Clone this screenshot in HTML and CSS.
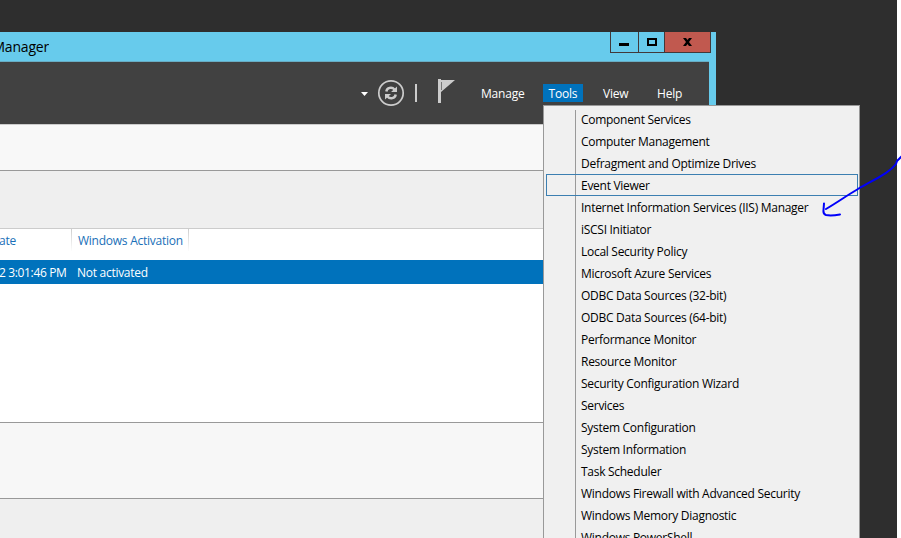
FILE: index.html
```html
<!DOCTYPE html>
<html lang="en">
<head>
<meta charset="utf-8">
<title>Server Manager</title>
<link rel="stylesheet" href="styles.css">
</head>
<body>
<div class="desktop">
  <div class="window">
    <header class="titlebar">
      <h1 class="title"><span>Manager</span></h1>
      <div class="controls">
        <button class="ctl" aria-label="Minimize"><svg width="27" height="20" viewBox="0 0 27 20"><path d="M8 11h10v3H8z"/></svg></button>
        <button class="ctl max" aria-label="Maximize"><svg width="25" height="20" viewBox="0 0 25 20"><path fill-rule="evenodd" d="M8 6h10v8H8zM10 8v4h6V8z"/></svg></button>
        <button class="ctl close" aria-label="Close"><svg width="45" height="20" viewBox="0 0 45 20"><path d="M18 6h3l1.500 2L24 6h3l-3 4 3 4h-3l-1.500-2-1.500 2h-3l3-4z"/></svg></button>
      </div>
    </header>
    <div class="toolbar">
      <svg class="caret" width="7" height="4" viewBox="0 0 7 4"><path d="M0 0h7L3.500 4z" fill="#fff"/></svg>
      <svg class="refresh" width="28" height="28" viewBox="0 0 28 28" fill="none" stroke="#ccc"><circle cx="14" cy="14" r="12.200" stroke-width="1.700"/><path d="M9.300 12.500c.5-4 5.700-5 8.200-2M18.700 15.500c-.5 4-5.700 5-8.200 2" stroke-width="2.400"/><path d="M20 7.500v5.500h-6zM8 20.500V15h6z" fill="#ccc" stroke="none"/></svg>
      <i class="bar"></i>
      <svg class="flag" width="18" height="25" viewBox="0 0 18 25" fill="#ccc"><path d="M0 0h3v24H0zM3 1h14L3 13z"/><path d="M3.500 3v8" stroke="#777"/></svg>
      <nav class="nav"><a class="manage">Manage</a><a class="tools">Tools</a><a class="view">View</a><a class="help">Help</a></nav>
    </div>
    <main class="content">
      <section class="band top"></section>
      <section class="band filter"></section>
      <section class="grid">
        <div class="head"><span class="c1">ate</span><span class="c2">Windows Activation</span></div>
        <div class="row"><span class="c1">2 3:01:46 PM</span><span class="c2">Not activated</span></div>
      </section>
      <section class="band events"></section>
      <section class="band last"></section>
    </main>
  </div>
  <ul class="menu">
    <li>Component Services</li><li>Computer Management</li><li>Defragment and Optimize Drives</li><li class="focus">Event Viewer</li><li>Internet Information Services (IIS) Manager</li><li>iSCSI Initiator</li><li>Local Security Policy</li><li>Microsoft Azure Services</li><li>ODBC Data Sources (32-bit)</li><li>ODBC Data Sources (64-bit)</li><li>Performance Monitor</li><li>Resource Monitor</li><li>Security Configuration Wizard</li><li>Services</li><li>System Configuration</li><li>System Information</li><li>Task Scheduler</li><li>Windows Firewall with Advanced Security</li><li>Windows Memory Diagnostic</li><li>Windows PowerShell</li>
  </ul>
</div>
<svg class="arrow" width="85" height="70" viewBox="816 150 85 70" fill="none" stroke="#0000fa" stroke-width="2" stroke-linecap="round" stroke-linejoin="round"><path d="M902 156L897 161L896 164C889 173 877 178 858 189C846 196 838 202 826 209M824 203.500L823.500 210Q823 214 826 215Q831 216 840 214.500"/></svg>
</body>
</html>
```
FILE: styles.css
```css
* { box-sizing: border-box; }
body {
  margin: 0;
  width: 901px;
  height: 538px;
  overflow: hidden;
  background: #fff;
  font: 12px/22px "Open Sans", "Noto Sans", sans-serif;
  letter-spacing: -0.28px;
  color: #000;
}
.desktop { position: relative; width: 897px; height: 538px; padding-top: 32px; background: #2e2e2e; overflow: hidden; }
.window { width: 716px; height: 506px; padding-right: 7px; background: #67cbec; }
.titlebar { display: flex; justify-content: space-between; height: 30px; margin-right: -7px; padding-right: 5px; }
.title { margin: 0; width: 49px; height: 30px; display: flex; justify-content: flex-end; overflow: hidden; font-size: 14px; line-height: 29px; font-weight: 400; letter-spacing: -0.2px; }
.controls { display: flex; height: 21px; border: 1px solid #42393a; border-top: 0; }
.ctl { display: block; padding: 0; border: 0; background: none; height: 20px; }
.ctl svg { display: block; }
.max { border-left: 1px solid #42393a; }
.close { border-left: 1px solid #42393a; background: #c1594f; }
.toolbar { display: flex; align-items: flex-start; height: 63px; border-top: 1px solid #68adc4; margin-top: -1px; background: #414141; color: #fff; }
.caret { margin: 30px 0 0 361px; }
.refresh { margin: 17px 0 0 9px; }
.bar { width: 2px; height: 18px; margin: 22px 0 0 10px; background: #ccc; }
.flag { margin: 17px 0 0 21px; }
.nav { display: flex; margin-top: 22px; line-height: 20px; letter-spacing: -0.2px; }
.manage { width: 62px; margin-left: 25px; }
.tools { width: 40px; text-align: center; background: #0072bc; height: 18px; }
.view { margin-left: 20px; width: 54px; }
.content { background: #fff; height: 414px; }
.band { border-top: 1px solid #999; background: #efefef; }
.top { height: 46px; border-color: #ccc; background: #f8f8f8; }
.filter { height: 58px; }
.grid { height: 194px; border-top: 1px solid #ccc; }
.events { height: 76px; background: #f7f7f7; }
.last { height: 40px; }
.head, .row { display: flex; }
.head { height: 31px; color: #1a6fb8; letter-spacing: -0.25px; }
.head .c1 { width: 73px; border-right: 1px solid; margin-left: -1px; }
.head .c2 { width: 117px; border-right: 1px solid; padding-left: 6px; }
.head span { height: 22px; line-height: 24px; border-image: linear-gradient(#ccc, #fff) 1; border-left: 0; }
.row { height: 24px; line-height: 26px; background: #0072bc; color: #fff; }
.row .c1 { width: 78px; margin-left: -1px; letter-spacing: -0.35px; }
.menu { position: absolute; left: 543px; top: 105px; width: 317px; height: 440px; margin: 0; padding: 3px 1px 0; list-style: none; border: 1px solid #999; background: linear-gradient(#999, #999) 31px 4px / 1px 440px no-repeat #f0f0f0; }
.menu li { height: 22px; padding-left: 36px; white-space: nowrap; }
.menu .focus { height: 22px; margin: -1px 0 1px 1px; padding-left: 34px; border: 1px solid #3c7fb1; line-height: 22px; }
.arrow { position: absolute; left: 816px; top: 150px; }
```
